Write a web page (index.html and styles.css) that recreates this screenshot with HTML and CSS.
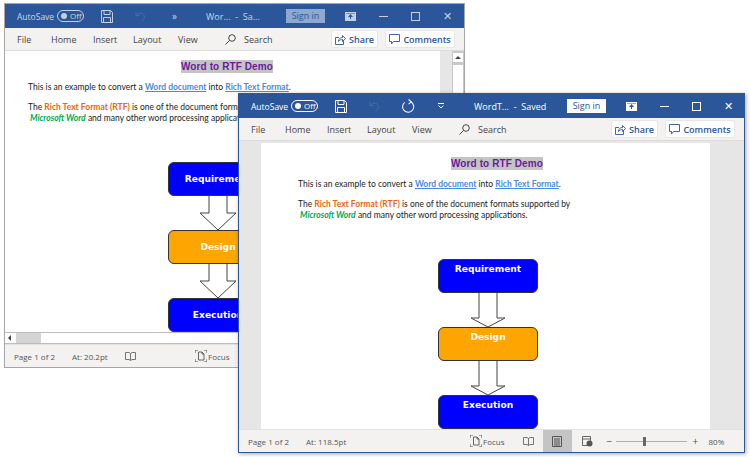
FILE: index.html
```html
<!DOCTYPE html>
<html lang="en">
<head>
	<meta charset="utf-8" />
	<title>Word to RTF Demo</title>
	<link rel="stylesheet" href="styles.css">
</head>
<body>
	<svg class="defs" width="0" height="0">
		<symbol id="i-save" viewBox="0 0 12 13"><path d="M.5.5h9l2 2v10H.5zM3 .5v4h6v-4M2.500 12.500v-5h7v5" fill="none" stroke="currentColor"/></symbol>
		<symbol id="i-undo" viewBox="0 0 12 12"><path d="M1 1v4h4M1.500 5C3 2.500 6 1.500 8.500 3c2.500 2 2.500 5.500-1 8" fill="none" stroke="currentColor"/></symbol>
		<symbol id="i-redo" viewBox="0 0 14 15"><path d="M7 .5l3 2.500-3 2.500M9.500 3A6 6 0 1 1 3 3.500" fill="none" stroke="currentColor" stroke-width="1.100"/></symbol>
		<symbol id="i-more" viewBox="0 0 8 8"><path d="M1 1.500h6M1.500 3.500L4 6l2.500-2.500" fill="none" stroke="currentColor"/></symbol>
		<symbol id="i-display" viewBox="0 0 11 9"><path d="M0 0h11v9H0z" fill="currentColor"/><path d="M5.500 2L3 5h2v2h1V5h2z M1 1h9v.6H1z" fill="#2b579a"/></symbol>
		<symbol id="i-search" viewBox="0 0 11 11"><circle cx="7" cy="4" r="3.300" fill="none" stroke="currentColor"/><path d="M4.500 6.500L.5 10.500" stroke="currentColor" fill="none"/></symbol>
		<symbol id="i-share" viewBox="0 0 11 11"><path d="M4 3.500H.5v7h8V7M3.500 7.500c0-3 2-4 4-4V1.500l3 3-3 3V5.500c-1.500 0-3 .5-4 2z" fill="none" stroke="currentColor" stroke-width=".9"/></symbol>
		<symbol id="i-comment" viewBox="0 0 11 11"><path d="M.5.5h10v7H4.500L2.500 10V7.500h-2z" fill="none" stroke="currentColor" stroke-width=".9"/></symbol>
		<symbol id="i-book" viewBox="0 0 11 11"><path d="M.5 1.500h3.500l1.500 1 1.500-1h3.500v7H7l-1.500 1-1.500-1H.5zM5.500 2.500v7" fill="none" stroke="currentColor" stroke-width=".9"/></symbol>
		<symbol id="i-focus" viewBox="0 0 12 12"><path d="M0 3V0h3M9 0h3v3M12 9v3H9M3 12H0V9" fill="none" stroke="currentColor"/><path d="M3.500 2h3.500l2 2v6H3.500zM7 2v2h2" fill="none" stroke="currentColor" stroke-width=".9"/></symbol>
		<symbol id="i-print" viewBox="0 0 10 11"><path d="M.5.500h9v10h-9zM2 3h6M2 5h6M2 7h6M2 9h6" fill="none" stroke="currentColor"/></symbol>
		<symbol id="i-web" viewBox="0 0 11 11"><path d="M.5.500h8v9h-8zM.5 3h8" fill="none" stroke="currentColor" stroke-width=".9"/><circle cx="7.500" cy="7.500" r="3" fill="currentColor"/></symbol>
	</svg>

	<!-- window behind -->
	<div class="window window-back">
		<div class="titlebar">
			<span class="autosave">AutoSave</span>
			<span class="toggle"><i></i>Off</span>
			<svg class="ic ic-save"><use href="#i-save"/></svg>
			<svg class="ic ic-undo"><use href="#i-undo"/></svg>
			<span class="chevrons">»</span>
			<span class="docname">Wor... &nbsp;- &nbsp;Sa...</span>
			<span class="signin">Sign in</span>
			<svg class="ic ic-display"><use href="#i-display"/></svg>
			<span class="win-btn win-min"></span>
			<span class="win-btn win-max"></span>
			<span class="win-btn win-close">✕</span>
		</div>
		<div class="ribbon">
			<span class="tab tab-file">File</span>
			<span class="tab tab-home">Home</span>
			<span class="tab tab-insert">Insert</span>
			<span class="tab tab-layout">Layout</span>
			<span class="tab tab-view">View</span>
			<svg class="ic ic-search"><use href="#i-search"/></svg>
			<span class="tab">Search</span>
			<span class="rb-btn rb-share"><svg class="ic"><use href="#i-share"/></svg>Share</span>
			<span class="rb-btn rb-comments"><svg class="ic"><use href="#i-comment"/></svg>Comments</span>
		</div>
		<div class="doc">
			<div class="page">
				<h1 class="doc-title"><span>Word to RTF Demo</span></h1>
				<p>This is an example to convert a <a>Word document</a> into <a>Rich Text Format</a>.</p>
				<p>The <b class="orange">Rich Text Format (RTF)</b> is one of the document formats supported by<br>
				<b class="green">Microsoft Word</b> and many other word processing applications.</p>
				<div class="flow">
					<div class="node node-blue">Requirement</div>
					<svg class="arrow" viewBox="0 0 36 34"><path d="M9 0V17H0L18 34 36 17H27V0"/></svg>
					<div class="node node-orange">Design</div>
					<svg class="arrow" viewBox="0 0 36 34"><path d="M9 0V17H0L18 34 36 17H27V0"/></svg>
					<div class="node node-blue">Execution</div>
				</div>
			</div>
			<div class="gutter"></div>
			<div class="vscroll">
				<div class="vscroll-btn"></div>
				<div class="vscroll-thumb"></div>
			</div>
		</div>
		<div class="hscroll">
			<div class="hscroll-btn"></div>
			<div class="hscroll-thumb"></div>
		</div>
		<div class="status">
			<span class="st-page">Page 1 of 2</span>
			<span class="st-at">At: 20.2pt</span>
			<svg class="ic ic-book"><use href="#i-book"/></svg>
			<svg class="ic ic-focus"><use href="#i-focus"/></svg>
			<span>Focus</span>
		</div>
	</div>

	<!-- window in front -->
	<div class="window window-front">
		<div class="titlebar">
			<span class="autosave">AutoSave</span>
			<span class="toggle"><i></i>Off</span>
			<svg class="ic ic-save"><use href="#i-save"/></svg>
			<svg class="ic ic-undo"><use href="#i-undo"/></svg>
			<svg class="ic ic-redo"><use href="#i-redo"/></svg>
			<svg class="ic ic-more"><use href="#i-more"/></svg>
			<span class="docname">WordT... &nbsp;- &nbsp;Saved</span>
			<span class="signin">Sign in</span>
			<svg class="ic ic-display"><use href="#i-display"/></svg>
			<span class="win-btn win-min"></span>
			<span class="win-btn win-max"></span>
			<span class="win-btn win-close">✕</span>
		</div>
		<div class="ribbon">
			<span class="tab tab-file">File</span>
			<span class="tab tab-home">Home</span>
			<span class="tab tab-insert">Insert</span>
			<span class="tab tab-layout">Layout</span>
			<span class="tab tab-view">View</span>
			<svg class="ic ic-search"><use href="#i-search"/></svg>
			<span class="tab">Search</span>
			<span class="rb-btn rb-share"><svg class="ic"><use href="#i-share"/></svg>Share</span>
			<span class="rb-btn rb-comments"><svg class="ic"><use href="#i-comment"/></svg>Comments</span>
		</div>
		<div class="doc">
			<div class="page">
				<h1 class="doc-title"><span>Word to RTF Demo</span></h1>
				<p>This is an example to convert a <a>Word document</a> into <a>Rich Text Format</a>.</p>
				<p>The <b class="orange">Rich Text Format (RTF)</b> is one of the document formats supported by<br>
				<b class="green">Microsoft Word</b> and many other word processing applications.</p>
				<div class="flow">
					<div class="node node-blue">Requirement</div>
					<svg class="arrow" viewBox="0 0 36 34"><path d="M9 0V25H1L18 34 35 25H27V0"/></svg>
					<div class="node node-orange">Design</div>
					<svg class="arrow" viewBox="0 0 36 34"><path d="M9 0V25H1L18 34 35 25H27V0"/></svg>
					<div class="node node-blue">Execution</div>
				</div>
			</div>
		</div>
		<div class="status">
			<span class="st-page">Page 1 of 2</span>
			<span class="st-at">At: 118.5pt</span>
			<svg class="ic ic-focus"><use href="#i-focus"/></svg>
			<span>Focus</span>
			<svg class="ic ic-book"><use href="#i-book"/></svg>
			<span class="st-view"><svg class="ic ic-print"><use href="#i-print"/></svg></span>
			<svg class="ic ic-web"><use href="#i-web"/></svg>
			<span class="zoom-minus">−</span>
			<span class="slider"><i></i></span>
			<span class="zoom-plus">+</span>
			<span class="zoom-val">80%</span>
		</div>
	</div>
</body>
</html>
```

FILE: styles.css
```css
html, body {
	margin: 0;
	height: 100%;
	background-color: white;
	overflow: hidden;
}

.defs {
	position: absolute;
}

/* windows sit on a free desktop */
.window {
	position: absolute;
	box-sizing: border-box;
	display: flex;
	flex-direction: column;
	overflow: hidden;
	font-family: "Open Sans", "Noto Sans", sans-serif;
	font-size: 9px;
	color: #444;
	background-color: white;
}

.window-back {
	left: 4px;
	top: 3px;
	width: 461px;
	height: 365px;
	border: 1px solid #a6a6a6;
}

.window-front {
	left: 238px;
	top: 93px;
	width: 507px;
	height: 360px;
	border: 1px solid #2b579a;
	box-shadow: 1px 1px 4px rgba(0,0,0,0.35);
}

.ic {
	display: block;
	flex: none;
	width: 11px;
	height: 11px;
}

/* title bar */
.titlebar {
	flex: none;
	display: flex;
	align-items: center;
	height: 24px;
	background-color: #2b579a;
	color: white;
}

.titlebar > * {
	flex: none;
}

.autosave {
	margin-left: 12px;
	width: 40px;
	font-size: 8.5px;
	white-space: nowrap;
}

.toggle {
	display: flex;
	align-items: center;
	box-sizing: border-box;
	width: 27px;
	height: 12px;
	border: 1px solid white;
	border-radius: 6px;
	font-size: 8px;
	line-height: 10px;
	padding-left: 3px;
	gap: 3px;
}

.toggle i {
	width: 6px;
	height: 6px;
	border-radius: 50%;
	background-color: white;
}

.ic-save {
	margin-left: 17px;
	width: 12px;
	height: 13px;
}

.ic-undo {
	margin-left: 22px;
	color: #4a6fa8;
}

.ic-redo {
	margin-left: 22px;
	width: 13px;
	height: 14px;
}

.ic-more {
	margin-left: 22px;
	width: 8px;
	height: 8px;
}

.chevrons {
	margin-left: 26px;
	width: 8px;
	font-size: 10px;
	opacity: 0.7;
}

.docname {
	margin-left: 29px;
	width: 93px;
	white-space: nowrap;
}

.window-back .docname {
	margin-left: 26px;
	width: 80px;
}

.signin {
	box-sizing: border-box;
	width: 39px;
	height: 14px;
	line-height: 14px;
	text-align: center;
	background-color: white;
	color: #2b579a;
}

.ic-display {
	margin-left: 20px;
	width: 11px;
	height: 9px;
}

.win-btn {
	display: flex;
	align-items: center;
	justify-content: center;
	box-sizing: border-box;
	margin-left: 23px;
	width: 9px;
	height: 9px;
}

.win-min {
	height: 1px;
	background-color: white;
}

.win-max {
	border: 1px solid white;
}

.win-close {
	font-size: 11px;
	font-family: "DejaVu Sans", sans-serif;
}

/* the window behind has lost focus, so its bar is dimmed */
.window-back .titlebar > * {
	opacity: 0.72;
}

.window-back .signin {
	background-color: #8ea8cf;
	color: #2b579a;
	opacity: 1;
}

.window-back .ic-undo {
	opacity: 1;
}

/* ribbon */
.ribbon {
	flex: none;
	display: flex;
	align-items: center;
	box-sizing: border-box;
	height: 23px;
	padding-right: 9px;
	background-color: #f3f2f1;
	border-bottom: 1px solid #dcdbd9;
}

.ribbon > * {
	flex: none;
}

.tab {
	white-space: nowrap;
}

.tab-file { margin-left: 12px; width: 34px; }
.tab-home { width: 42px; }
.tab-insert { width: 40px; }
.tab-layout { width: 45px; }
.tab-view { width: 47px; }

.ic-search {
	margin-right: 8px;
	width: 11px;
	height: 11px;
}

.rb-btn {
	display: flex;
	align-items: center;
	justify-content: center;
	gap: 3px;
	box-sizing: border-box;
	height: 18px;
	background-color: white;
	border: 1px solid #e8e7e6;
	border-radius: 2px;
	color: #2b579a;
	font-weight: 600;
}

.rb-share {
	margin-left: auto;
	width: 47px;
}

.rb-comments {
	margin-left: 7px;
	width: 70px;
}

/* document */
.doc {
	flex: 1;
	display: flex;
	min-height: 0;
	overflow: hidden;
}

.window-front .doc {
	padding: 2px 34px 0 22px;
	background-color: #e6e6e6;
}

.page {
	flex: 1;
	min-width: 0;
	box-sizing: border-box;
	background-color: white;
	font-family: Lato, "Noto Sans", sans-serif;
	font-size: 8.5px;
	line-height: 11px;
	color: #222;
}

.window-back .page {
	padding: 10px 14px 0 23px;
}

.window-front .page {
	padding: 15px 14px 0 37px;
}

.doc-title {
	margin: 0;
	text-align: center;
	font-family: "Liberation Sans", Arial, sans-serif;
	font-size: 10px;
	font-weight: bold;
	letter-spacing: 0.1px;
	line-height: 12px;
	color: #6a1b9a;
}

.doc-title span {
	background-color: #c4c4c4;
	padding: 1px 0;
}

.page p {
	margin: 9px 0 0;
	white-space: nowrap;
}

.page a {
	color: #4a8be0;
	font-weight: bold;
	text-decoration: underline;
}

.orange {
	color: #e8660c;
}

.green {
	color: #00a84f;
	font-style: italic;
	margin-left: 2px;
}

/* flow diagram */
.flow {
	margin: 38px 0 0 140px;
	width: 100px;
	display: flex;
	flex-direction: column;
	align-items: center;
}

.node {
	box-sizing: border-box;
	width: 100%;
	height: 34px;
	flex: none;
	border: 1px solid #333;
	border-radius: 6px;
	text-align: center;
	color: white;
	font-family: "DejaVu Sans", sans-serif;
	font-size: 9.1px;
	font-weight: bold;
	line-height: 32px;
}

.window-front .node {
	line-height: 19px;
}

.node-blue {
	background-color: #0000ff;
}

.node-orange {
	background-color: #ffa500;
}

.arrow {
	display: block;
	flex: none;
	width: 36px;
	height: 34px;
}

.arrow path {
	fill: white;
	stroke: #444;
}

/* scrollbars of the back window */
.gutter {
	flex: none;
	width: 12px;
	background-color: #e6e6e6;
}

.vscroll {
	flex: none;
	box-sizing: border-box;
	width: 12px;
	padding: 2px 1px 0;
	background-color: #c8c8c8;
}

.vscroll-btn {
	height: 9px;
	background-color: white;
	position: relative;
}

.vscroll-btn::after {
	content: "";
	position: absolute;
	left: 2px;
	top: 3px;
	border: 3px solid transparent;
	border-top: 0;
	border-bottom: 3px solid #444;
}

.vscroll-thumb {
	margin-top: 3px;
	height: 100%;
	background-color: white;
}

.hscroll {
	flex: none;
	display: flex;
	box-sizing: border-box;
	height: 12px;
	background-color: white;
	border-top: 1px solid #bdbdbd;
	border-bottom: 1px solid #bdbdbd;
	padding-left: 1px;
}

.hscroll-btn {
	width: 10px;
	position: relative;
}

.hscroll-btn::after {
	content: "";
	position: absolute;
	left: 2px;
	top: 2px;
	border: 3px solid transparent;
	border-left: 0;
	border-right: 3px solid #444;
}

.hscroll-thumb {
	width: 25px;
	background-color: #d4d4d4;
}

/* status bar */
.status {
	flex: none;
	display: flex;
	align-items: center;
	height: 22px;
	background-color: #f3f2f1;
	font-size: 8px;
	color: #555;
	border-top: 1px solid #e3e2e1;
}

.status > * {
	flex: none;
}

.st-page {
	margin-left: 9px;
	width: 58px;
}

.st-at {
	width: 53px;
}

.window-front .st-at {
	width: 164px;
}

.ic-book {
	color: #666;
}

.window-back .ic-focus {
	margin-left: 59px;
}

.ic-focus {
	width: 12px;
	height: 12px;
	margin-right: 1px;
}

.window-front .ic-book {
	margin-left: 18px;
}

.st-view {
	display: flex;
	align-items: center;
	justify-content: center;
	align-self: stretch;
	margin-left: 9px;
	width: 29px;
	background-color: #c4c4c4;
}

.ic-print {
	width: 10px;
}

.ic-web {
	margin-left: 10px;
}

.zoom-minus {
	margin-left: 14px;
	width: 9px;
	font-size: 10px;
}

.slider {
	position: relative;
	width: 71px;
	height: 1px;
	background-color: #b0b0b0;
}

.slider i {
	position: absolute;
	left: 27px;
	top: -4px;
	width: 3px;
	height: 9px;
	background-color: #666;
}

.zoom-plus {
	margin-left: 6px;
	width: 16px;
	font-size: 10px;
}

.zoom-val {
	white-space: nowrap;
}
```
